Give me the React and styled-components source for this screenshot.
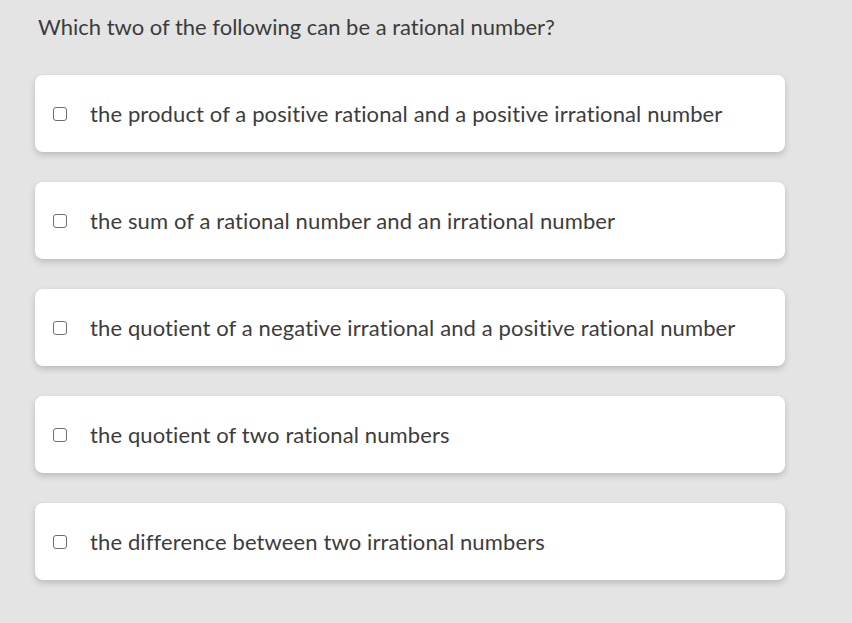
import React from 'react';
import styled, { createGlobalStyle } from 'styled-components';

const GlobalStyle = createGlobalStyle`
  html, body {
    margin: 0;
    padding: 0;
    background: #e4e4e4;
    font-family: Lato, "Liberation Sans", sans-serif;
    font-variant-ligatures: none;
  }
`;

const Page = styled.div`
  width: 852px;
  height: 623px;
  padding: 13px 0 0 35px;
  box-sizing: border-box;
  background: #e4e4e4;
`;

const Question = styled.div`
  margin-left: 3px;
  font-size: 22px;
  line-height: 28px;
  color: #3c3c3c;
`;

const Options = styled.div`
  display: flex;
  flex-direction: column;
  gap: 30px;
  margin-top: 34px;
  width: 750px;
`;

const Card = styled.label`
  display: flex;
  align-items: center;
  height: 77px;
  padding-left: 18px;
  box-sizing: border-box;
  background: #fff;
  border-radius: 8px;
  box-shadow: 0 3px 6px rgba(0, 0, 0, 0.18);
  cursor: pointer;
`;

const Box = styled.span`
  width: 12px;
  height: 12px;
  border: 1px solid #6e6e6e;
  border-radius: 3px;
  flex: none;
`;

const Text = styled.span`
  margin-left: 23px;
  font-size: 22px;
  letter-spacing: 0.12px;
  color: #3c3c3c;
`;

const options = [
  'the product of a positive rational and a positive irrational number',
  'the sum of a rational number and an irrational number',
  'the quotient of a negative irrational and a positive rational number',
  'the quotient of two rational numbers',
  'the difference between two irrational numbers',
];

export default function App() {
  return (
    <Page>
      <GlobalStyle />
      <Question>Which two of the following can be a rational number?</Question>
      <Options>
        {options.map((o) => (
          <Card key={o}>
            <Box />
            <Text>{o}</Text>
          </Card>
        ))}
      </Options>
    </Page>
  );
}
